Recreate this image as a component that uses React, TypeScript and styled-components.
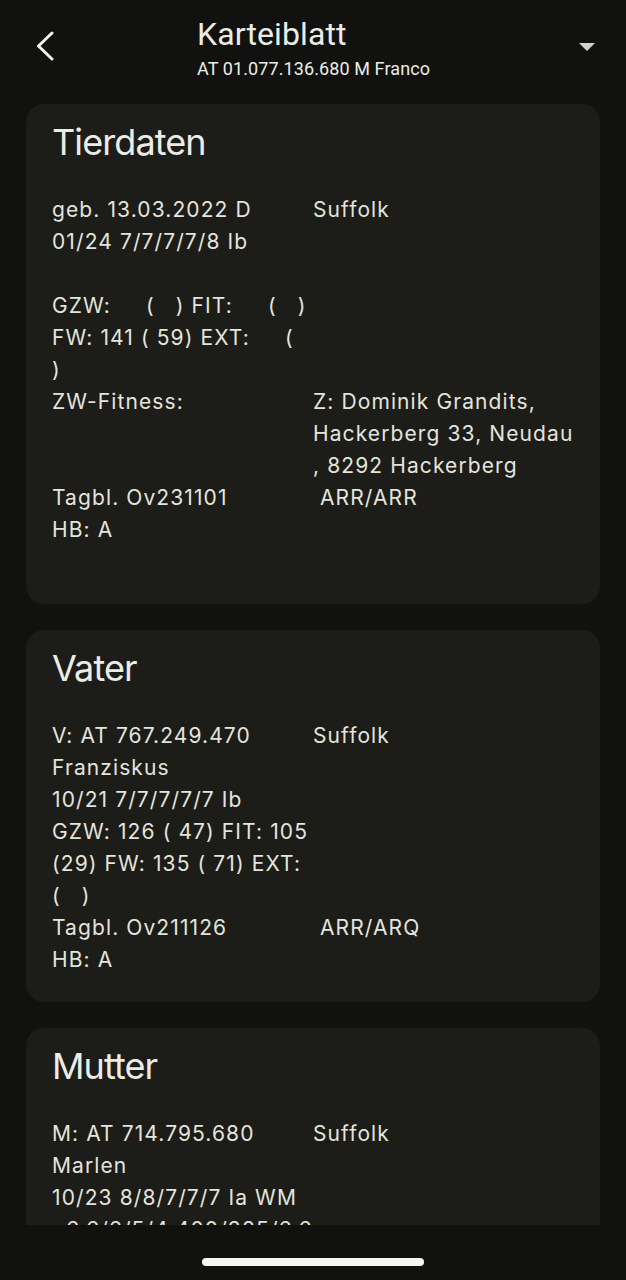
import styled, { createGlobalStyle } from "styled-components";
import React from "react";

type Row = { left: string; right?: string };
type Sheet = { title: string; rows: Row[]; extraSpace?: boolean };

const sheets: Sheet[] = [
  {
    title: "Tierdaten",
    extraSpace: true,
    rows: [
      {
        left: "geb. 13.03.2022 D\n01/24 7/7/7/7/8 Ib\n\nGZW:     (   ) FIT:     (   )\nFW: 141 ( 59) EXT:     (\n)",
        right: "Suffolk",
      },
      { left: "ZW-Fitness:", right: "Z: Dominik Grandits,\nHackerberg 33, Neudau\n, 8292 Hackerberg" },
      { left: "Tagbl. Ov231101", right: " ARR/ARR" },
      { left: "HB: A" },
    ],
  },
  {
    title: "Vater",
    rows: [
      {
        left: "V: AT 767.249.470\nFranziskus\n10/21 7/7/7/7/7 Ib\nGZW: 126 ( 47) FIT: 105\n(29) FW: 135 ( 71) EXT:\n(   )",
        right: "Suffolk",
      },
      { left: "Tagbl. Ov211126", right: " ARR/ARQ" },
      { left: "HB: A" },
    ],
  },
  {
    title: "Mutter",
    rows: [
      {
        left: "M: AT 714.795.680\nMarlen\n10/23 8/8/7/7/7 Ia WM\n  6.6/6/5/4 400/385/6.6\nGZW: 118 ( 52)",
        right: "Suffolk",
      },
    ],
  },
];

const GlobalStyle = createGlobalStyle`
  body {
    margin: 0;
    background: #11120f;
    font-family: Inter, "Noto Sans", sans-serif;
  }
`;

const Screen = styled.div`
  width: 626px;
  height: 1280px;
  display: flex;
  flex-direction: column;
  background: #11120f;
  color: #e7e7e0;
  overflow: hidden;
`;

const Header = styled.header`
  display: grid;
  grid-template-columns: 163px 1fr auto;
  align-items: start;
  padding: 14px 30px 0 34px;
  height: 90px;
  box-sizing: border-box;
`;

const BackButton = styled.button`
  background: none;
  border: none;
  padding: 0;
  margin-top: 17px;
  width: 24px;
  height: 30px;
  display: flex;
  cursor: pointer;
`;

const TitleBlock = styled.div`
  display: flex;
  flex-direction: column;
`;

const Title = styled.h1`
  margin: 0;
  font-family: Roboto, "Liberation Sans", sans-serif;
  font-weight: 400;
  font-size: 32px;
  line-height: 40px;
  letter-spacing: 0.1px;
  color: #ecece6;
`;

const Subtitle = styled.div`
  margin-top: 4px;
  font-family: Roboto, "Liberation Sans", sans-serif;
  font-size: 18px;
  line-height: 22px;
  letter-spacing: 0.1px;
  color: #ecece6;
`;

const DropButton = styled.button`
  background: none;
  border: none;
  padding: 0;
  margin-top: 28px;
  width: 18px;
  height: 10px;
  display: flex;
  cursor: pointer;
`;

const Scroll = styled.main`
  flex: 1;
  overflow: hidden;
  display: flex;
  flex-direction: column;
  gap: 26px;
  padding: 14px 26px 0;
`;

const Card = styled.section<{ $extra?: boolean }>`
  flex-shrink: 0;
  background: #1c1c19;
  border-radius: 18px;
  padding: 16px 26px ${(p) => (p.$extra ? 58 : 26)}px;
`;

const CardTitle = styled.h2`
  margin: 0 0 30px;
  font-weight: 400;
  font-size: 36px;
  line-height: 44px;
  letter-spacing: -0.9px;
  color: #ecece6;
`;

const Grid = styled.div`
  display: grid;
  grid-template-columns: 261px 1fr;
`;

const Cell = styled.div`
  white-space: pre;
  font-size: 21px;
  line-height: 32px;
  letter-spacing: 1.1px;
  color: #e4e4dd;
`;

const Footer = styled.footer`
  height: 55px;
  display: flex;
  justify-content: center;
  padding-top: 33px;
  box-sizing: border-box;
`;

const HomeBar = styled.div`
  width: 222px;
  height: 8px;
  border-radius: 4px;
  background: #f6f6f4;
`;

export default function App() {
  return (
    <>
      <GlobalStyle />
      <Screen>
        <Header>
          <BackButton aria-label="Zurück">
            <svg width="24" height="30" viewBox="0 0 24 30" fill="none">
              <path d="M18 2 L4.5 15 L18 28" stroke="#f2f2ee" strokeWidth="3" strokeLinecap="round" strokeLinejoin="round" />
            </svg>
          </BackButton>
          <TitleBlock>
            <Title>Karteiblatt</Title>
            <Subtitle>AT 01.077.136.680 M Franco</Subtitle>
          </TitleBlock>
          <DropButton aria-label="Menü">
            <svg width="18" height="10" viewBox="0 0 18 10">
              <path d="M1 1 H17 L9 9 Z" fill="#d2d2cd" />
            </svg>
          </DropButton>
        </Header>
        <Scroll>
          {sheets.map((s) => (
            <Card key={s.title} $extra={s.extraSpace}>
              <CardTitle>{s.title}</CardTitle>
              <Grid>
                {s.rows.map((r, i) => (
                  <React.Fragment key={i}>
                    <Cell>{r.left}</Cell>
                    <Cell>{r.right ?? ""}</Cell>
                  </React.Fragment>
                ))}
              </Grid>
            </Card>
          ))}
        </Scroll>
        <Footer>
          <HomeBar />
        </Footer>
      </Screen>
    </>
  );
}
